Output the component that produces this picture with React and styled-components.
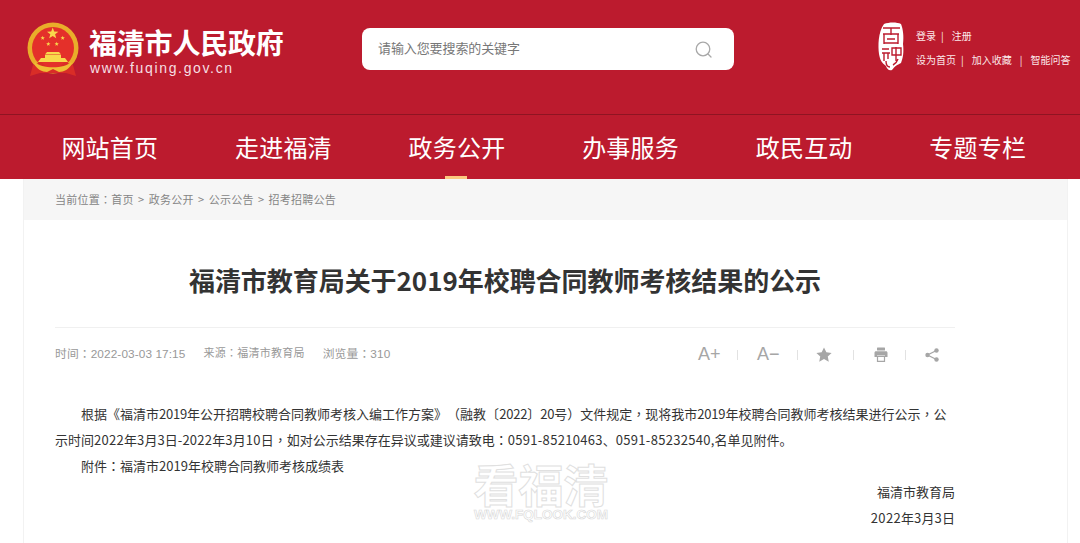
import React from 'react';
import styled, { createGlobalStyle } from 'styled-components';

const GlobalStyle = createGlobalStyle`
  html, body {
    margin: 0;
    padding: 0;
    height: 543px;
    overflow: hidden;
    background: #fff;
    font-family: "Noto Sans CJK SC", "Noto Sans", sans-serif;
    text-spacing-trim: space-all;
  }
`;

const Page = styled.div`
  width: 1080px;
  height: 543px;
  overflow: hidden;
`;

const Header = styled.header`
  height: 114px;
  background: #bc1b2e;
  border-bottom: 1px solid #8f1422;
  display: flex;
  align-items: flex-start;
`;

const Brand = styled.div`
  flex: none;
  display: flex;
  align-items: flex-start;
  width: 336px;
  padding: 22px 0 0 26px;
`;

const BrandText = styled.div`
  margin-left: 10px;
  color: #fff;
`;

const BrandName = styled.div`
  font-size: 28px;
  font-weight: 700;
  line-height: 41px;
  letter-spacing: -0.2px;
  white-space: nowrap;
`;

const BrandUrl = styled.div`
  font-family: "Liberation Sans", sans-serif;
  font-size: 14px;
  line-height: 16px;
  letter-spacing: 1.65px;
  margin: -3px 0 0 1px;
  color: #f6dfe2;
`;

const Search = styled.div`
  flex: none;
  width: 372px;
  height: 42px;
  margin-top: 28px;
  background: #fff;
  border-radius: 8px;
  display: flex;
  align-items: center;
  justify-content: space-between;
  padding: 0 22px 0 16px;
  box-sizing: border-box;
`;

const Placeholder = styled.span`
  font-size: 13px;
  line-height: 18px;
  letter-spacing: -0.1px;
  padding-bottom: 3px;
  color: #777;
`;

const Tools = styled.div`
  flex: none;
  display: flex;
  margin-left: 144px;
  padding-top: 22px;
`;

const ToolLinks = styled.div`
  margin-left: 12px;
  padding-top: 1px;
  color: #fbe9ea;
  font-size: 10px;
`;

const ToolRow = styled.div`
  display: flex;
  height: 24px;
  align-items: center;
  white-space: nowrap;
`;

const ToolSep = styled.span`
  margin: 0 ${(p) => p.$gap}px 0 ${(p) => p.$left}px;
`;

const Nav = styled.nav`
  height: 64px;
  background: #bc1b2e;
  padding-left: 23px;
  display: grid;
  grid-template-columns: repeat(6, 173.6px);
`;

const NavItem = styled.a`
  position: relative;
  color: #fff;
  font-size: 24px;
  line-height: 64px;
  letter-spacing: 0.2px;
  text-align: center;
  &::after {
    content: '';
    display: ${(p) => (p.$active ? 'block' : 'none')};
    position: absolute;
    left: 75px;
    bottom: 0;
    width: 22px;
    height: 3px;
    background: #fcc97f;
  }
`;

const Main = styled.main`
  position: relative;
  width: 1045px;
  height: 364px;
  margin-left: 23px;
  border-left: 1px solid #f2f2f2;
  border-right: 1px solid #f2f2f2;
  box-sizing: border-box;
`;

const Crumbs = styled.div`
  height: 41px;
  background: #f6f6f6;
  padding-left: 31px;
  font-size: 11px;
  line-height: 41px;
  letter-spacing: 0.25px;
  color: #858585;
`;

const CrumbSep = styled.span`
  margin: 0 4.3px;
`;

const Article = styled.article`
  width: 900px;
  margin-left: 31px;
`;

const Title = styled.h1`
  margin: 0;
  height: 107px;
  border-bottom: 1px solid #f0f0f0;
  font-size: 26px;
  font-weight: 700;
  line-height: 120px;
  letter-spacing: -0.05px;
  color: #333;
  text-align: center;
  white-space: nowrap;
`;

const Meta = styled.div`
  display: flex;
  align-items: center;
  justify-content: space-between;
  height: 50px;
  font-size: 11px;
  color: #999;
`;

const MetaInfo = styled.div`
  display: flex;
  gap: 18px;
  margin-bottom: 2px;
`;

const MetaSource = styled.span`
  letter-spacing: 0.25px;
`;

const MetaTime = styled.span`
  font-family: "Liberation Sans", "Noto Sans CJK SC", sans-serif;
  font-size: 11.8px;
  letter-spacing: 0.1px;
`;

const Actions = styled.div`
  display: flex;
  align-items: center;
  margin-top: 3px;
  padding-right: 16px;
  color: #a6a6a6;
`;

const ActionText = styled.span`
  font-family: "Liberation Sans", sans-serif;
  font-size: 18px;
  width: 22px;
  text-align: center;
`;

const ActionSep = styled.i`
  display: block;
  width: 1px;
  height: 10px;
  background: #e2e2e2;
  margin: 0 ${(p) => p.$right}px 0 ${(p) => p.$left}px;
`;

const Body = styled.div`
  margin-top: 23px;
  font-size: 13px;
  line-height: 26px;
  color: #333;
`;

const Para = styled.p`
  margin: 0;
  text-indent: 26px;
`;

const Sign = styled.p`
  margin: 0;
  text-align: right;
`;

// centred full-width punctuation, as in the reference
const Punct = styled.span`
  font-family: "Noto Sans CJK TC", sans-serif;
`;

const Num = styled.span`
  letter-spacing: ${(p) => p.$ls}px;
`;

const Watermark = styled.div`
  position: absolute;
  left: 449px;
  top: 281px;
  width: 136px;
  text-align: center;
  color: #fff;
  pointer-events: none;
`;

const MarkName = styled.div`
  font-size: 45px;
  line-height: 47px;
  font-weight: 700;
  white-space: nowrap;
  -webkit-text-stroke: 1px #e0e0e0;
`;

const MarkUrl = styled.div`
  font-family: "Liberation Sans", sans-serif;
  font-size: 13.5px;
  line-height: 14px;
  margin-top: 1px;
  font-weight: 700;
  white-space: nowrap;
  -webkit-text-stroke: 0.6px #d8d8d8;
`;

const starPoints = (cx, cy, r) => {
  const pts = [];
  for (let i = 0; i < 10; i++) {
    const radius = i % 2 ? r * 0.42 : r;
    const a = (Math.PI / 5) * i - Math.PI / 2;
    pts.push(`${cx + radius * Math.cos(a)},${cy + radius * Math.sin(a)}`);
  }
  return pts.join(' ');
};

const Emblem = () => (
  <svg width="53" height="56" viewBox="0 0 53 56">
    <circle cx="27" cy="26" r="25.500" fill="#e9ae2a" />
    <circle cx="27" cy="26" r="21" fill="#e4302a" />
    <polygon points={starPoints(26.7, 11.500, 6)} fill="#f8d84c" />
    <polygon points={starPoints(16.7, 16, 2.300)} fill="#f8d84c" />
    <polygon points={starPoints(36.7, 16, 2.300)} fill="#f8d84c" />
    <polygon points={starPoints(22.3, 22, 2.300)} fill="#f8d84c" />
    <polygon points={starPoints(30.7, 22, 2.300)} fill="#f8d84c" />
    <path d="M21 30h12l2 2.500H19z" fill="#f8d84c" />
    <rect x="19" y="33" width="16" height="3" fill="#f8d84c" />
    <path d="M15 36h24l3 4H12z" fill="#f8d84c" />
    <path d="M7 43l8-3 6 5h12l6-5 8 3 3 11-10-3H14L4 54z" fill="#d92d27" />
    <path d="M9 40c6 7 30 7 36 0l1 2c-3 5-8 8-13 8l-6-3-6 3c-5 0-10-3-13-8z" fill="#efbd35" />
  </svg>
);

const SearchIcon = () => (
  <svg width="17" height="17" viewBox="0 0 17 17" fill="none" stroke="#a8a8a8" strokeWidth="1.300">
    <circle cx="8" cy="8" r="6.800" />
    <path d="M13 13l3 3" strokeLinecap="round" />
  </svg>
);

const Seal = () => (
  <svg width="26" height="49" viewBox="0 0 26 49">
    <path d="M6 2c5-2 13-2 17 0 2 5 3 12 2 20 1 8 0 14-2 19-4 2-6 3-9 7-3 1-5-1-6-4-4-3-6-6-7-12C0 24 0 10 6 2z" fill="#fff" />
    <g fill="none" stroke="#bc1b2e" strokeWidth="1.400">
      <path d="M5 6h17M13 6v7M5 12h16M6 12v10M20 12v10M6 21h14M9 17h8" />
      <path d="M4 27h7M4 31h8M6 31v8M10 31v6M14 26h9v7h-9zM18 25v14M8 39c0 4 2 6 4 6M20 37c-1 3-3 5-5 6" />
    </g>
  </svg>
);

const Star = () => (
  <svg width="16" height="15" viewBox="0 0 17 16">
    <polygon points="8.500,0.500 11,5.600 16.600,6.300 12.500,10.100 13.600,15.600 8.500,12.900 3.400,15.600 4.500,10.100 0.400,6.300 6,5.600" fill="#a6a6a6" />
  </svg>
);

const Printer = () => (
  <svg width="14" height="15" viewBox="0 0 14 15" fill="#a6a6a6">
    <rect x="3" y="0.500" width="8" height="3" rx="0.500" />
    <path d="M2 4.300h10c.9 0 1.500.6 1.500 1.500v4.200h-2.500V8.500H3V10H.5V5.800c0-.9.6-1.500 1.500-1.500z" />
    <path d="M3.500 9.500h7v4.800h-7z" fill="none" stroke="#a6a6a6" strokeWidth="1.200" />
  </svg>
);

const Share = () => (
  <svg width="14" height="14" viewBox="0 0 14 14">
    <path d="M11.500 2.500L2.500 7l9 4.500" fill="none" stroke="#a6a6a6" strokeWidth="1.300" />
    <circle cx="11.500" cy="2.500" r="2.200" fill="#a6a6a6" />
    <circle cx="2.500" cy="7" r="2.200" fill="#a6a6a6" />
    <circle cx="11.500" cy="11.500" r="2.200" fill="#a6a6a6" />
  </svg>
);

const navItems = ['网站首页', '走进福清', '政务公开', '办事服务', '政民互动', '专题专栏'];

export default function App() {
  return (
    <Page>
      <GlobalStyle />
      <Header>
        <Brand>
          <Emblem />
          <BrandText>
            <BrandName>福清市人民政府</BrandName>
            <BrandUrl>www.fuqing.gov.cn</BrandUrl>
          </BrandText>
        </Brand>
        <Search>
          <Placeholder>请输入您要搜索的关键字</Placeholder>
          <SearchIcon />
        </Search>
        <Tools>
          <Seal />
          <ToolLinks>
            <ToolRow>
              登录<ToolSep $left={5} $gap={8}>|</ToolSep>注册
            </ToolRow>
            <ToolRow>
              设为首页<ToolSep $left={5} $gap={8}>|</ToolSep>加入收藏<ToolSep $left={8} $gap={8}>|</ToolSep>智能问答
            </ToolRow>
          </ToolLinks>
        </Tools>
      </Header>
      <Nav>
        {navItems.map((item) => (
          <NavItem key={item} $active={item === '政务公开'}>{item}</NavItem>
        ))}
      </Nav>
      <Main>
        <Crumbs>
          当前位置<Punct>：</Punct>首页<CrumbSep>&gt;</CrumbSep>政务公开<CrumbSep>&gt;</CrumbSep>公示公告<CrumbSep>&gt;</CrumbSep>招考招聘公告
        </Crumbs>
        <Article>
          <Title>福清市教育局关于2019年校聘合同教师考核结果的公示</Title>
          <Meta>
            <MetaInfo>
              <MetaTime>时间<Punct>：</Punct>2022-03-03 17:15</MetaTime>
              <MetaSource>来源<Punct>：</Punct>福清市教育局</MetaSource>
              <MetaTime>浏览量<Punct>：</Punct>310</MetaTime>
            </MetaInfo>
            <Actions>
              <ActionText>A+</ActionText>
              <ActionSep $left={17} $right={19} />
              <ActionText>A−</ActionText>
              <ActionSep $left={18} $right={18} />
              <Star />
              <ActionSep $left={21} $right={20} />
              <Printer />
              <ActionSep $left={17} $right={19} />
              <Share />
            </Actions>
          </Meta>
          <Body>
            <Para>
              根据《福清市<Num $ls={-0.2}>2019</Num>年公开招聘校聘合同教师考核入编工作方案》<Punct>（</Punct>融教〔<Num $ls={-0.2}>2022</Num>〕<Num $ls={-0.2}>20</Num>号<Punct>）</Punct>文件规定<Punct>，</Punct>现将我市<Num $ls={-0.2}>2019</Num>年校聘合同教师考核结果进行公示<Punct>，</Punct>公<wbr />示时间<Num $ls={0.25}>2022</Num>年<Num $ls={0.25}>3</Num>月<Num $ls={0.25}>3</Num>日-<Num $ls={0.25}>2022</Num>年<Num $ls={0.25}>3</Num>月<Num $ls={0.25}>10</Num>日<Punct>，</Punct>如对公示结果存在异议或建议请致电<Punct>：</Punct><Num $ls={0.3}>0591-85210463</Num>、<Num $ls={0.3}>0591-85232540</Num>,名单见附件。
            </Para>
            <Para>附件<Punct>：</Punct>福清市2019年校聘合同教师考核成绩表</Para>
            <Sign>福清市教育局</Sign>
            <Sign><Num $ls={0.3}>2022</Num>年<Num $ls={0.3}>3</Num>月<Num $ls={0.3}>3</Num>日</Sign>
          </Body>
        </Article>
        <Watermark>
          <MarkName>看福清</MarkName>
          <MarkUrl>WWW.FQLOOK.COM</MarkUrl>
        </Watermark>
      </Main>
    </Page>
  );
}
